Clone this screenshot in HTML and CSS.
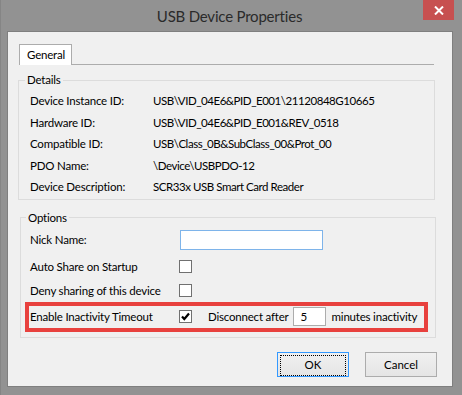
FILE: index.html
```html
<!DOCTYPE html>
<html lang="en">
<head>
    <meta charset="UTF-8">
    <meta name="viewport" content="width=device-width, initial-scale=1.0">
    <title>USB Device Properties</title>
    <link rel="stylesheet" href="styles.css">
</head>
<body>
    <div class="window">
        <div class="titlebar">
            <span class="title">USB Device Properties</span>
            <button class="close" title="Close">
                <svg width="10" height="9" viewBox="0 0 10 9"><path d="M1 0.5 L9 8.5 M9 0.5 L1 8.5" stroke="#fff" stroke-width="2" fill="none"/></svg>
            </button>
        </div>
        <div class="client">
            <div class="tabs">
                <div class="tab">General</div>
            </div>
            <div class="panel">
                <fieldset class="group details">
                    <legend>Details</legend>
                    <div class="row"><span class="label">Device Instance ID:</span><span class="value">USB\VID_04E6&amp;PID_E001\21120848G10665</span></div>
                    <div class="row"><span class="label">Hardware ID:</span><span class="value">USB\VID_04E6&amp;PID_E001&amp;REV_0518</span></div>
                    <div class="row"><span class="label">Compatible ID:</span><span class="value">USB\Class_0B&amp;SubClass_00&amp;Prot_00</span></div>
                    <div class="row"><span class="label">PDO Name:</span><span class="value">\Device\USBPDO-12</span></div>
                    <div class="row"><span class="label">Device Description:</span><span class="value">SCR33x USB Smart Card Reader</span></div>
                </fieldset>
                <fieldset class="group options">
                    <legend>Options</legend>
                    <div class="opt nick"><span class="label">Nick Name:</span><input type="text" class="nickname"></div>
                    <div class="opt auto"><span class="label">Auto Share on Startup</span><span class="check"></span></div>
                    <div class="opt deny"><span class="label">Deny sharing of this device</span><span class="check"></span></div>
                    <div class="opt highlight">
                        <span class="label">Enable Inactivity Timeout</span>
                        <span class="check checked">
                            <svg width="11" height="11" viewBox="0 0 11 11"><path d="M2 5.5 L4.3 8 L9 2.5" stroke="#000" stroke-width="2.2" fill="none"/></svg>
                        </span>
                        <span class="after">Disconnect after</span>
                        <input type="text" class="minutes" value="5">
                        <span class="unit">minutes inactivity</span>
                    </div>
                </fieldset>
            </div>
            <div class="buttons">
                <button class="btn default"><span>OK</span></button>
                <button class="btn">Cancel</button>
            </div>
        </div>
    </div>
</body>
</html>
```

FILE: styles.css
```css
body {
    margin: 0;
    font-family: Lato, 'Noto Sans', sans-serif;
    font-size: 11.5px;
    letter-spacing: -0.2px;
    color: #000;
    white-space: nowrap;
}
.window {
    width: 462px;
    height: 395px;
    background: #929292;
    box-sizing: border-box;
    border-left: 1px solid #858585;
}
.titlebar {
    position: relative;
    height: 31px;
    text-align: center;
}
.title {
    display: inline-block;
    font-size: 15px;
    letter-spacing: -0.2px;
    line-height: 32px;
    color: #2a2a2a;
    margin-left: -4px;
}
.close {
    position: absolute;
    top: 0;
    left: 422px;
    width: 31px;
    height: 20px;
    border: none;
    padding: 0;
    background: #c75050;
    display: flex;
    align-items: center;
    justify-content: center;
}
.client {
    margin-left: 6px;
    width: 446px;
    height: 356px;
    box-sizing: border-box;
    border: 1px solid #7f7f7f;
    background: #f0f0f0;
    padding-top: 12px;
}
.tabs {
    padding-left: 11px;
    height: 20px;
    position: relative;
    z-index: 1;
}
.tab {
    width: 53px;
    height: 21px;
    box-sizing: border-box;
    border: 1px solid #acacac;
    border-bottom: none;
    background: #fff;
    padding-left: 7px;
    line-height: 19px;
}
.panel {
    margin-left: 11px;
    width: 415px;
    border-top: 1px solid #acacac;
}
.group {
    margin: 0;
    padding: 0;
    border: 1px solid #dcdcdc;
    min-width: 0;
}
.group legend {
    padding: 0 2px;
    line-height: 16px;
}
.details legend {
    margin-left: -5px;
}
.options legend {
    margin-left: -4px;
}
.details {
    width: 417px;
    margin-left: -1px;
    margin-top: 7px;
    box-sizing: border-box;
    padding: 2px 0 1px 11px;
}
.row {
    display: flex;
    height: 21.5px;
    line-height: 21.5px;
}
.row .label {
    width: 123px;
    flex-shrink: 0;
}
.row .value {
    letter-spacing: -0.45px;
}
.options {
    width: 416px;
    margin-left: 1px;
    margin-top: 10px;
    box-sizing: border-box;
    padding: 0 0 5px 9px;
}
.opt {
    display: flex;
    align-items: center;
}
.opt .label {
    width: 149px;
    flex-shrink: 0;
}
.nick { height: 28px; }
.auto { height: 26px; }
.deny { height: 22px; }
.nickname {
    width: 143px;
    height: 20px;
    box-sizing: border-box;
    border: 1px solid #7eb4ea;
    margin: 0 0 0 1px;
    padding: 0;
    font: inherit;
}
.check {
    width: 13px;
    height: 13px;
    flex-shrink: 0;
    box-sizing: border-box;
    border: 1px solid #707070;
    background: #fff;
    display: flex;
    align-items: center;
    justify-content: center;
}
.highlight {
    margin-left: -5px;
    width: 403px;
    height: 30px;
    box-sizing: border-box;
    border: 4px solid #e8413e;
    padding-left: 1px;
}
.after {
    margin-left: 16px;
}
.minutes {
    width: 33px;
    height: 19px;
    flex-shrink: 0;
    box-sizing: border-box;
    border: 1px solid #acacac;
    margin: 0 0 0 4px;
    padding: 0 0 0 7px;
    font: inherit;
}
.unit {
    margin-left: 6px;
}
.buttons {
    display: flex;
    justify-content: flex-end;
    gap: 16px;
    margin-top: 14px;
    margin-right: 15px;
}
.btn {
    width: 72px;
    height: 25px;
    box-sizing: border-box;
    border: 1px solid #acacac;
    background: linear-gradient(#f0f0f0, #e5e5e5);
    font: inherit;
    color: #000;
    padding: 0;
}
.btn.default {
    border-color: #3399ff;
    padding: 2px;
}
.btn.default span {
    display: block;
    height: 100%;
    line-height: 17px;
    border: 1px dotted #000;
}
```
